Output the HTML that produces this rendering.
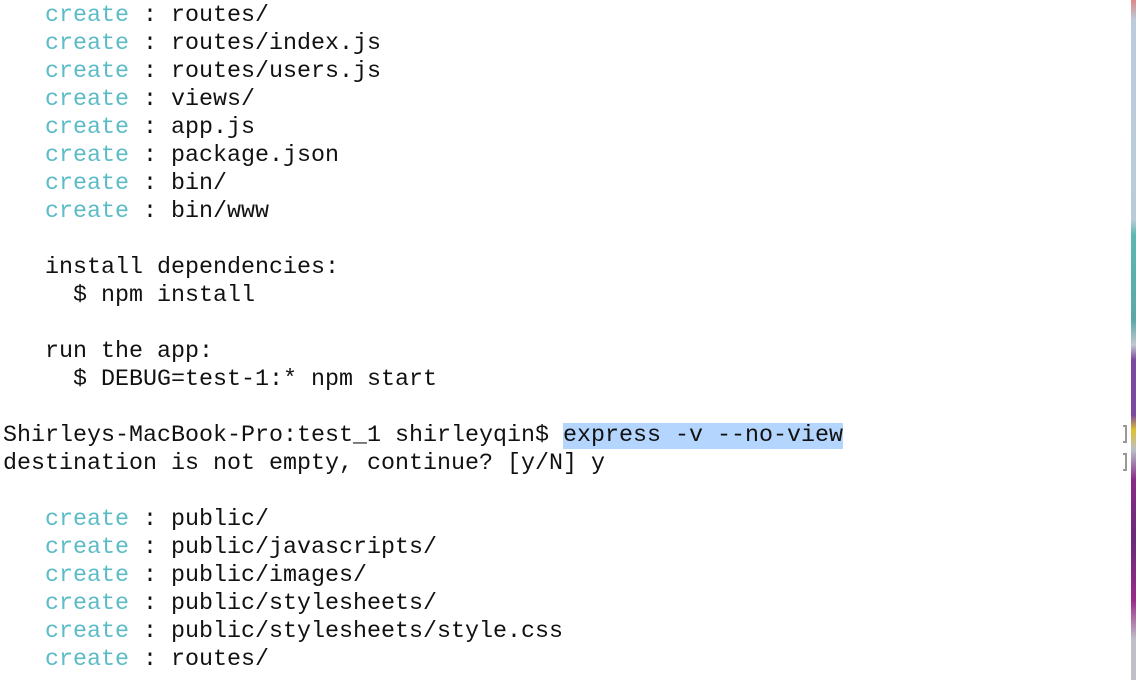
<!DOCTYPE html>
<html><head><meta charset="utf-8"><style>
html,body{margin:0;padding:0;background:#fff;width:1136px;height:680px;overflow:hidden;position:relative}
pre{margin:0;position:absolute;left:3px;top:2px;font-family:"Liberation Mono",monospace;font-size:23.33px;line-height:28px;color:#111;white-space:pre}
.c{color:#5bbcc8}
.h{background:#b4d5fe}
.strip{position:absolute;left:1131px;top:0;width:5px;height:680px;
background:linear-gradient(#d88 0,#bcd 20px,#b8ccd8 220px,#5bb8b0 235px,#5aa8a8 320px,#c0c8d0 345px,#7a4aa0 360px,#7a4aa0 415px,#e0c030 430px,#b8c0c8 450px,#8a2a8a 480px,#6a2a7a 540px,#9a2a8a 600px,#c0c0c8 640px,#c0c0c8 680px)}
.br{position:absolute;left:1123px;width:4px;height:18px;border:2px solid #999;border-left:none;box-sizing:border-box}
</style></head><body>
<pre><span class="c">   create</span> : routes/
<span class="c">   create</span> : routes/index.js
<span class="c">   create</span> : routes/users.js
<span class="c">   create</span> : views/
<span class="c">   create</span> : app.js
<span class="c">   create</span> : package.json
<span class="c">   create</span> : bin/
<span class="c">   create</span> : bin/www

   install dependencies:
     $ npm install

   run the app:
     $ DEBUG=test-1:* npm start

Shirleys-MacBook-Pro:test_1 shirleyqin$ <span class="h">express -v --no-view</span>
destination is not empty, continue? [y/N] y

<span class="c">   create</span> : public/
<span class="c">   create</span> : public/javascripts/
<span class="c">   create</span> : public/images/
<span class="c">   create</span> : public/stylesheets/
<span class="c">   create</span> : public/stylesheets/style.css
<span class="c">   create</span> : routes/</pre>
<div class="br" style="top:425px"></div>
<div class="br" style="top:453px"></div>
<div class="strip"></div>
</body></html>
